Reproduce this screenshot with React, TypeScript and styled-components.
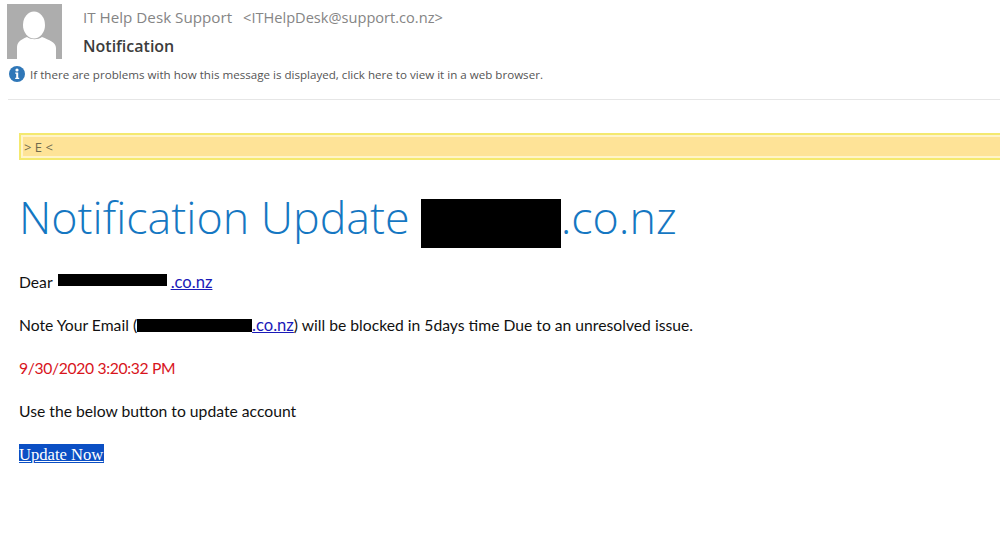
import React from "react";
import styled, { createGlobalStyle } from "styled-components";

const Global = createGlobalStyle`
  html, body { margin: 0; padding: 0; background: #fff; }
  body { width: 1000px; height: 550px; overflow: hidden; font-family: "Open Sans", "Liberation Sans", sans-serif; }
`;

const Page = styled.div`
  width: 1000px;
  height: 550px;
  overflow: hidden;
  display: flex;
  flex-direction: column;
`;

const Header = styled.header`
  display: grid;
  grid-template-columns: 55px 1fr;
  column-gap: 21px;
  padding: 4px 0 0 7px;
`;

const Avatar = styled.svg`
  display: block;
  width: 55px;
  height: 55px;
`;

const HeaderText = styled.div`
  display: flex;
  flex-direction: column;
  padding-top: 3px;
`;

const SenderLine = styled.div`
  display: flex;
  align-items: baseline;
  gap: 11px;
  height: 29px;
  color: #858585;
`;

const SenderName = styled.span`
  font-size: 15.2px;
  line-height: 20px;
`;

const SenderAddress = styled.span`
  font-size: 14.6px;
  line-height: 20px;
`;

const Subject = styled.div`
  font-size: 16px;
  line-height: 20px;
  font-weight: 600;
  color: #3c3c3c;
`;

const InfoBar = styled.div`
  display: flex;
  align-items: center;
  gap: 5px;
  margin: 7px 0 0 9px;
  height: 16px;
  font-size: 11.6px;
  color: #555;
`;

const Divider = styled.hr`
  border: 0;
  height: 1px;
  background: #e6e6e6;
  margin: 17px 0 0 8px;
`;

const Body = styled.main`
  display: flex;
  flex-direction: column;
  padding: 33px 0 0 19px;
`;

const Banner = styled.div`
  box-sizing: border-box;
  height: 27px;
  margin-right: -6px;
  background: #fee397;
  border: 2px solid #f4e96f;
  outline: 2px solid #fff4c8;
  outline-offset: -4px;
  padding-left: 3px;
  display: flex;
  align-items: center;
  font-size: 13px;
  color: #6f6a4e;
`;

const Heading = styled.h1`
  margin: 28px 0 0 0;
  height: 58px;
  display: flex;
  align-items: center;
  font-size: 44.8px;
  line-height: 58px;
  font-weight: 300;
  color: #1577c2;
  white-space: nowrap;
`;

const HeadingMask = styled.span`
  display: block;
  width: 140px;
  height: 49px;
  margin: 12px 0 0 11px;
  background: #000;
`;

const Line = styled.p<{ $color?: string; $tight?: boolean }>`
  margin: 0;
  height: 20px;
  display: flex;
  align-items: center;
  font-family: "Lato", "Open Sans", sans-serif;
  font-size: 15.7px;
  line-height: 20px;
  letter-spacing: ${(p) => (p.$tight ? "-0.35px" : "0")};
  color: ${(p) => p.$color ?? "#111"};
  white-space: pre;
  & + & { margin-top: 23px; }
`;

const Mail = styled.a<{ $gap: number }>`
  color: #1a1ab8;
  font-size: 16.6px;
  text-decoration: underline;
  margin-left: ${(p) => p.$gap}px;
`;

const Mask = styled.span<{ $w: number; $up: number; $h: number; $left: number }>`
  display: block;
  width: ${(p) => p.$w}px;
  height: ${(p) => p.$h}px;
  margin-left: ${(p) => p.$left}px;
  background: #000;
  transform: translateY(${(p) => -p.$up}px);
  flex: none;
`;

const Lines = styled.div`
  display: flex;
  flex-direction: column;
  margin-top: 26px;
`;

const UpdateButton = styled.a`
  align-self: flex-start;
  margin-top: 23px;
  width: 85px;
  height: 19px;
  background: #0b4fc4;
  color: #fff;
  font-family: "Liberation Serif", serif;
  font-size: 16.6px;
  line-height: 21px;
  text-decoration: underline;
  white-space: nowrap;
`;

export default function App() {
  return (
    <Page>
      <Global />
      <Header>
        <Avatar viewBox="0 0 55 55" aria-hidden="true">
          <rect width="55" height="55" fill="#adadad" />
          <ellipse cx="27" cy="21" rx="11" ry="13.5" fill="#fff" />
          <path d="M10 55 V44 C10 38 13 36 20 33 C24 36 31 36 35 33 C42 36 49 38 49 44 V55 Z" fill="#fff" />
        </Avatar>
        <HeaderText>
          <SenderLine>
            <SenderName>IT Help Desk Support</SenderName>
            <SenderAddress>&lt;ITHelpDesk@support.co.nz&gt;</SenderAddress>
          </SenderLine>
          <Subject>Notification</Subject>
        </HeaderText>
      </Header>
      <InfoBar>
        <svg width="16" height="16" viewBox="0 0 16 16" aria-hidden="true">
          <circle cx="8" cy="8" r="8" fill="#2f77b8" />
          <circle cx="8" cy="4" r="1.6" fill="#fff" />
          <path d="M6.2 6.6 H9.2 V11.8 H10.2 V13 H6.2 V11.8 H7.2 V7.8 H6.2 Z" fill="#fff" />
        </svg>
        <span>If there are problems with how this message is displayed, click here to view it in a web browser.</span>
      </InfoBar>
      <Divider />
      <Body>
        <Banner>&gt; E &lt;</Banner>
        <Heading>
          Notification Update
          <HeadingMask />
          .co.nz
        </Heading>
        <Lines>
          <Line>
            Dear
            <Mask $w={109} $up={2} $h={12} $left={5} />
            <Mail href="#" $gap={4}>.co.nz</Mail>
          </Line>
          <Line>
            Note Your Email (
            <Mask $w={115} $up={0} $h={13} $left={0} />
            <Mail href="#" $gap={0}>.co.nz</Mail>) will be blocked in 5days time Due to an unresolved issue.
          </Line>
          <Line $color="#d8141c" $tight>9/30/2020 3:20:32 PM</Line>
          <Line>Use the below button to update account</Line>
        </Lines>
        <UpdateButton href="#">Update Now</UpdateButton>
      </Body>
    </Page>
  );
}
